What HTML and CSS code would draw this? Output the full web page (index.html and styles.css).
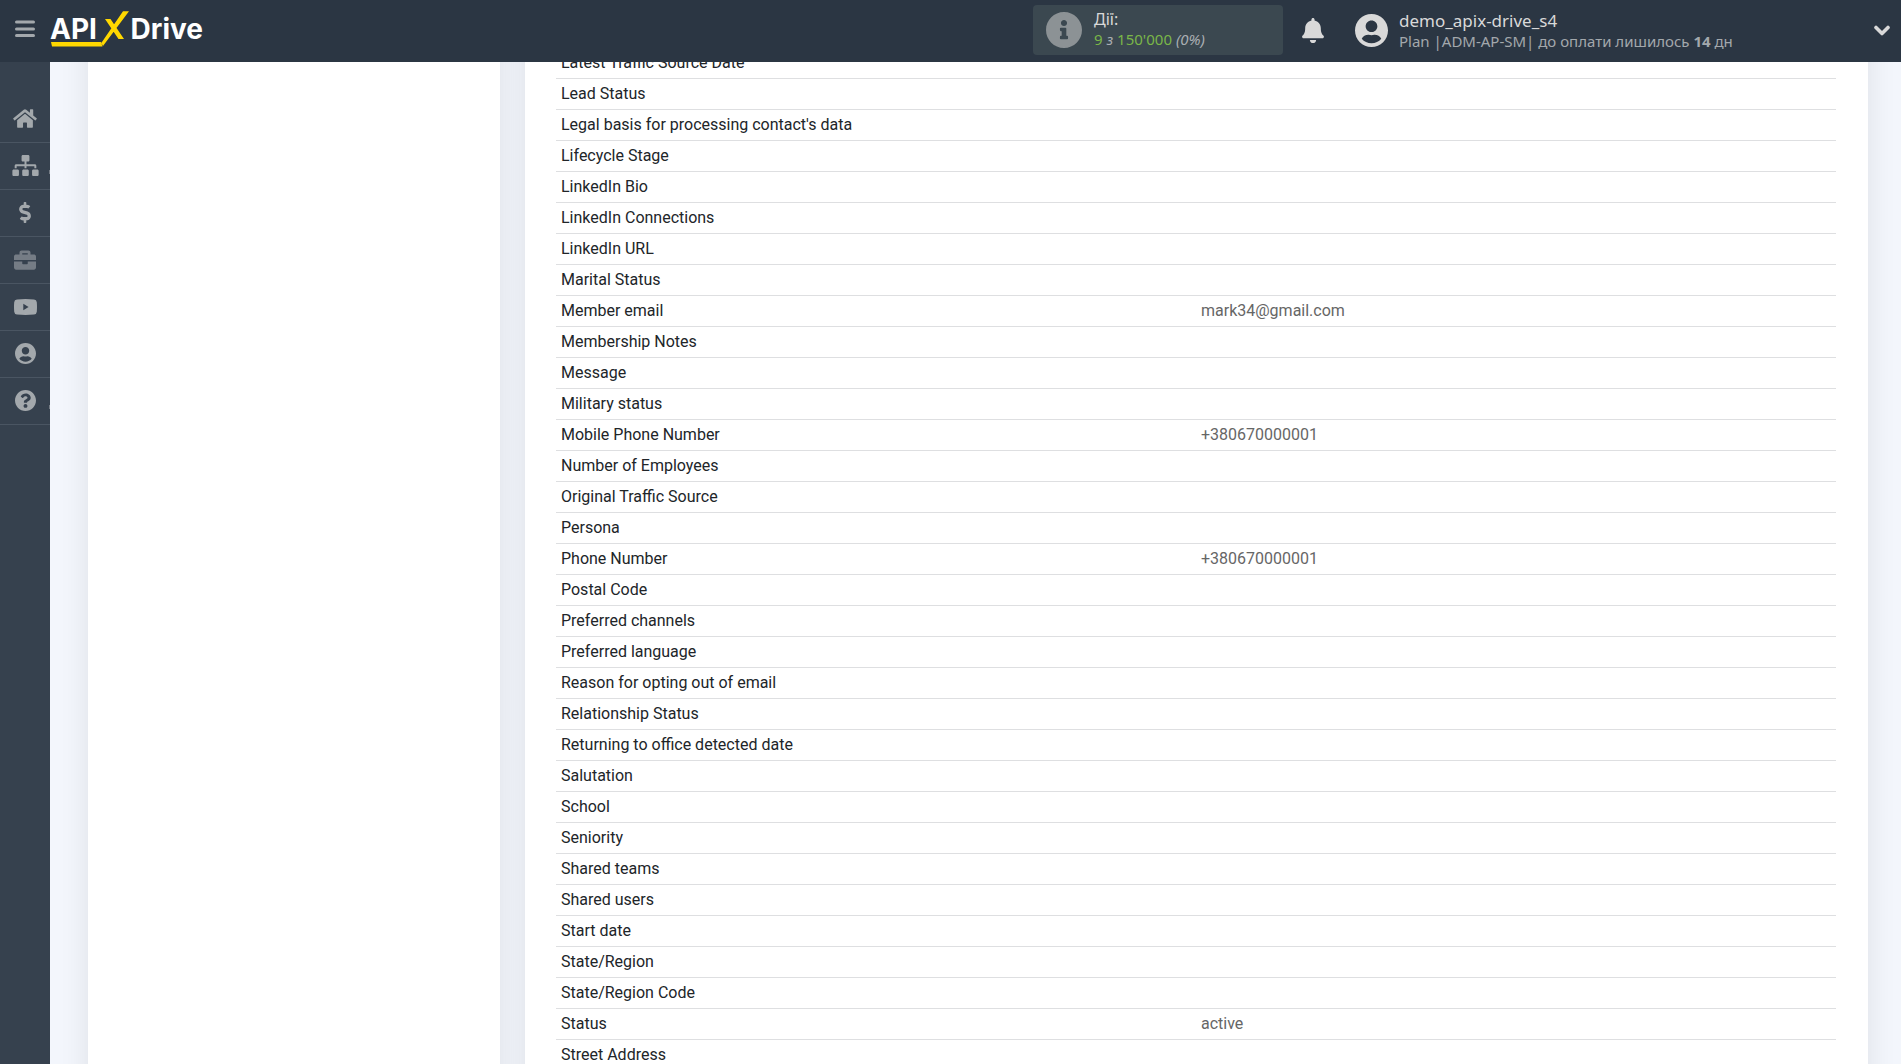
FILE: index.html
```html
<!DOCTYPE html>
<html lang="uk">
<head>
<meta charset="utf-8">
<title>APIXDrive</title>
<link rel="stylesheet" href="styles.css">
</head>
<body>
<header class="topbar">
  <button class="icon-btn menu-btn" type="button" aria-label="Меню">
    <svg width="20" height="18" viewBox="0 0 20 18"><path d="M1.500 2h17M1.500 9h17M1.500 15.500h17" stroke="currentColor" stroke-width="3" stroke-linecap="round"/></svg>
  </button>
  <a class="logo" href="#" aria-label="APIXDrive">
    <span class="logo-text">API</span>
    <span class="logo-text">Drive</span>
    <svg class="logo-mark" width="80" height="38" viewBox="0 0 80 38"><path d="M1 30h50l1.500 4.500H2zM51.300 31L73-.7h6L53 34zM55 7h5.500L74 27h-5.500z" fill="#ffd800"/></svg>
  </a>
  <a class="actions" href="#">
    <svg width="36" height="36" viewBox="8 8 496 496"><path fill="currentColor" d="M256 8C119.043 8 8 119.083 8 256c0 136.997 111.043 248 248 248s248-111.003 248-248C504 119.083 392.957 8 256 8zm0 110c23.196 0 42 18.804 42 42s-18.804 42-42 42-42-18.804-42-42 18.804-42 42-42zm56 254c0 6.627-5.373 12-12 12h-88c-6.627 0-12-5.373-12-12v-24c0-6.627 5.373-12 12-12h12v-64h-12c-6.627 0-12-5.373-12-12v-24c0-6.627 5.373-12 12-12h64c6.627 0 12 5.373 12 12v100h12c6.627 0 12 5.373 12 12v24z"/></svg>
    <span class="actions-text">
      <span class="actions-title">Дії:</span>
      <span class="actions-count"><b>9</b> <i>з</i> <b>150'000</b> <i>(0%)</i></span>
    </span>
  </a>
  <button class="icon-btn bell-btn" type="button" aria-label="Сповіщення">
    <svg width="22" height="25" viewBox="0 0 448 512"><path fill="currentColor" d="M224 512c35.320 0 63.970-28.650 63.970-64H160.030c0 35.350 28.650 64 63.970 64zm215.390-149.710c-19.320-20.760-55.470-51.990-55.470-154.290 0-77.700-54.480-139.900-127.940-155.160V32c0-17.670-14.320-32-31.980-32s-31.980 14.330-31.980 32v20.840C118.560 68.100 64.080 130.300 64.080 208c0 102.300-36.150 133.530-55.470 154.290-6 6.450-8.660 14.160-8.610 21.710.11 16.400 12.980 32 32.100 32h383.800c19.120 0 32-15.600 32.100-32 .05-7.550-2.610-15.270-8.610-21.710z"/></svg>
  </button>
  <button class="account" type="button">
    <svg width="33" height="33" viewBox="0 8 496 496"><use href="#user"/></svg>
    <span class="account-text">
      <span class="account-name">demo_apix-drive_s4</span>
      <span class="account-plan">Plan |ADM-AP-SM| до оплати лишилось <b>14</b> дн</span>
    </span>
    <svg class="chevron" width="16" height="11" viewBox="0 0 16 11"><path d="M2 2.500l6 6 6-6" fill="none" stroke="currentColor" stroke-width="3.600" stroke-linecap="round" stroke-linejoin="round"/></svg>
  </button>
</header>
<div class="layout">
  <nav class="sidebar">
    <a href="#" aria-label="Головна"><svg width="24" height="21" viewBox="0 0 576 512"><path fill="currentColor" d="M280.370 148.260L96 300.110V464a16 16 0 0 0 16 16l112.060-.29a16 16 0 0 0 15.920-16V368a16 16 0 0 1 16-16h64a16 16 0 0 1 16 16v95.640a16 16 0 0 0 16 16.050L464 480a16 16 0 0 0 16-16V300L295.670 148.260a12.190 12.190 0 0 0-15.300 0zM571.600 251.470L488 182.560V44.050a12 12 0 0 0-12-12h-56a12 12 0 0 0-12 12v72.610L318.470 43a48 48 0 0 0-61 0L4.340 251.470a12 12 0 0 0-1.600 16.900l25.500 31A12 12 0 0 0 45.150 301l235.220-193.740a12.190 12.190 0 0 1 15.300 0L530.900 301a12 12 0 0 0 16.900-1.600l25.500-31a12 12 0 0 0-1.700-16.930z"/></svg></a>
    <a class="has-sub" href="#" aria-label="Зв'язки"><svg width="27" height="21" viewBox="0 0 640 512"><path fill="currentColor" d="M128 352H32c-17.670 0-32 14.330-32 32v96c0 17.670 14.330 32 32 32h96c17.670 0 32-14.330 32-32v-96c0-17.670-14.330-32-32-32zm-24-80h192v48h48v-48h192v48h48v-57.590c0-21.170-17.230-38.410-38.410-38.410H344v-64h40c17.670 0 32-14.330 32-32V32c0-17.670-14.330-32-32-32H256c-17.670 0-32 14.330-32 32v96c0 17.670 14.330 32 32 32h40v64H94.410C73.230 224 56 241.230 56 262.410V320h48v-48zm264 80h-96c-17.670 0-32 14.330-32 32v96c0 17.670 14.330 32 32 32h96c17.670 0 32-14.330 32-32v-96c0-17.670-14.330-32-32-32zm240 0h-96c-17.670 0-32 14.330-32 32v96c0 17.670 14.330 32 32 32h96c17.670 0 32-14.330 32-32v-96c0-17.670-14.330-32-32-32z"/></svg></a>
    <a href="#" aria-label="Оплата"><svg width="12" height="21" viewBox="0 0 288 512"><path fill="currentColor" d="M209.200 233.400l-108-31.600C88.700 198.200 80 186.500 80 173.500c0-16.300 13.200-29.500 29.500-29.500h66.300c12.200 0 24.200 3.700 34.200 10.500 6.100 4.100 14.300 3.100 19.500-2l34.800-34c7.100-6.900 6.100-18.400-1.800-24.500C238 74.800 207.400 64.100 176 64V16c0-8.800-7.200-16-16-16h-32c-8.800 0-16 7.200-16 16v48h-2.500C45.800 64-5.400 118.700.5 183.600c4.200 46.100 39.400 83.600 83.800 96.600l102.500 30c12.500 3.700 21.200 15.300 21.200 28.300 0 16.300-13.200 29.500-29.500 29.500h-66.300C100 368 88 364.300 78 357.500c-6.100-4.100-14.300-3.100-19.500 2l-34.800 34c-7.100 6.900-6.100 18.400 1.800 24.500 24.500 19.200 55.100 29.900 86.500 30v48c0 8.800 7.200 16 16 16h32c8.800 0 16-7.200 16-16v-48.200c46.600-.9 90.300-28.600 105.700-72.700 21.500-61.600-14.600-124.800-72.500-141.700z"/></svg></a>
    <a class="dim" href="#" aria-label="Портфель"><svg width="22" height="22" viewBox="0 0 512 512"><path fill="currentColor" d="M320 336c0 8.840-7.160 16-16 16h-96c-8.840 0-16-7.160-16-16v-48H0v144c0 25.600 22.400 48 48 48h416c25.600 0 48-22.400 48-48V288H320v48zm144-208h-80V80c0-25.600-22.400-48-48-48H176c-25.600 0-48 22.400-48 48v48H48c-25.600 0-48 22.400-48 48v80h512v-80c0-25.600-22.400-48-48-48zm-144 0H192V96h128v32z"/></svg></a>
    <a href="#" aria-label="Відео"><svg width="23" height="16" viewBox="0 0 23 16"><path fill="currentColor" fill-rule="evenodd" d="M3 .4Q11.500-.4 20 .4 22.600.6 22.800 3.200q.4 4.800 0 9.600-.2 2.600-2.800 2.800-8.500.8-17 0Q.4 15.400.2 12.800q-.4-4.800 0-9.600Q.4.600 3 .4zM9.300 4.800v6.400L14.600 8z"/></svg></a>
    <a href="#" aria-label="Профіль"><svg width="21" height="21" viewBox="0 8 496 496"><path id="user" fill="currentColor" d="M248 8C111 8 0 119 0 256s111 248 248 248 248-111 248-248S385 8 248 8zm0 96c48.600 0 88 39.400 88 88s-39.400 88-88 88-88-39.400-88-88 39.400-88 88-88zm0 344c-58.700 0-111.300-26.600-146.500-68.200 18.800-35.400 55.600-59.800 98.500-59.800 2.400 0 4.800.4 7.100 1.100 13 4.200 26.600 6.900 40.900 6.900 14.300 0 28-2.700 40.900-6.900 2.300-.7 4.700-1.100 7.100-1.100 42.900 0 79.700 24.400 98.500 59.800C359.300 421.400 306.700 448 248 448z"/></svg></a>
    <a class="has-sub" href="#" aria-label="Допомога"><svg width="21" height="21" viewBox="8 8 496 496"><path fill="currentColor" d="M504 256c0 136.997-111.043 248-248 248S8 392.997 8 256C8 119.083 119.043 8 256 8s248 111.083 248 248zM262.655 90c-54.497 0-89.255 22.957-116.549 63.758-3.536 5.286-2.353 12.415 2.715 16.258l34.699 26.310c5.205 3.947 12.621 3.008 16.665-2.122 17.864-22.658 30.113-35.797 57.303-35.797 20.429 0 45.698 13.148 45.698 32.958 0 14.976-12.363 22.667-32.534 33.976C247.128 238.528 216 254.941 216 296v4c0 6.627 5.373 12 12 12h56c6.627 0 12-5.373 12-12v-1.333c0-28.462 83.186-29.647 83.186-106.667 0-58.002-60.165-102-116.531-102zM256 338c-25.365 0-46 20.635-46 46 0 25.364 20.635 46 46 46s46-20.636 46-46c0-25.365-20.635-46-46-46z"/></svg></a>
  </nav>
  <main class="content">
    <div class="columns">
      <section class="card"></section>
      <section class="card">
        <table class="fields">
          <tbody>
            <tr><th scope="row">Latest Traffic Source Date</th><td></td></tr>
            <tr><th scope="row">Lead Status</th><td></td></tr>
            <tr><th scope="row">Legal basis for processing contact's data</th><td></td></tr>
            <tr><th scope="row">Lifecycle Stage</th><td></td></tr>
            <tr><th scope="row">LinkedIn Bio</th><td></td></tr>
            <tr><th scope="row">LinkedIn Connections</th><td></td></tr>
            <tr><th scope="row">LinkedIn URL</th><td></td></tr>
            <tr><th scope="row">Marital Status</th><td></td></tr>
            <tr><th scope="row">Member email</th><td>mark34@gmail.com</td></tr>
            <tr><th scope="row">Membership Notes</th><td></td></tr>
            <tr><th scope="row">Message</th><td></td></tr>
            <tr><th scope="row">Military status</th><td></td></tr>
            <tr><th scope="row">Mobile Phone Number</th><td>+380670000001</td></tr>
            <tr><th scope="row">Number of Employees</th><td></td></tr>
            <tr><th scope="row">Original Traffic Source</th><td></td></tr>
            <tr><th scope="row">Persona</th><td></td></tr>
            <tr><th scope="row">Phone Number</th><td>+380670000001</td></tr>
            <tr><th scope="row">Postal Code</th><td></td></tr>
            <tr><th scope="row">Preferred channels</th><td></td></tr>
            <tr><th scope="row">Preferred language</th><td></td></tr>
            <tr><th scope="row">Reason for opting out of email</th><td></td></tr>
            <tr><th scope="row">Relationship Status</th><td></td></tr>
            <tr><th scope="row">Returning to office detected date</th><td></td></tr>
            <tr><th scope="row">Salutation</th><td></td></tr>
            <tr><th scope="row">School</th><td></td></tr>
            <tr><th scope="row">Seniority</th><td></td></tr>
            <tr><th scope="row">Shared teams</th><td></td></tr>
            <tr><th scope="row">Shared users</th><td></td></tr>
            <tr><th scope="row">Start date</th><td></td></tr>
            <tr><th scope="row">State/Region</th><td></td></tr>
            <tr><th scope="row">State/Region Code</th><td></td></tr>
            <tr><th scope="row">Status</th><td>active</td></tr>
            <tr><th scope="row">Street Address</th><td></td></tr>
          </tbody>
        </table>
      </section>
    </div>
  </main>
</div>
</body>
</html>
```
FILE: styles.css
```css
* { box-sizing: border-box; }

body {
  margin: 0;
  height: 100vh;
  display: flex;
  flex-direction: column;
  overflow: hidden;
  background: #f3f6fc;
  color: #212529;
  font-family: Roboto, sans-serif;
  font-size: 16px;
}

svg { display: block; flex: none; }
a { color: inherit; text-decoration: none; }
button { padding: 0; border: 0; background: none; color: inherit; font: inherit; cursor: pointer; }

/* Top bar */
.topbar {
  flex: none;
  height: 62px;
  padding-bottom: 2px;
  display: flex;
  align-items: center;
  background: #2b3643;
  color: #d9d9d9;
  font-family: "Noto Sans", sans-serif;
}
.menu-btn { width: 50px; display: grid; place-items: center; padding-bottom: 2px; color: #a3a8ac; }

.logo {
  position: relative;
  display: flex;
  justify-content: space-between;
  width: 153px;
  height: 36px;
  color: #fff;
}
.logo-text { font: 700 28px/34px Inter, sans-serif; }
.logo-mark { position: absolute; left: 0; top: 0; overflow: visible; }

.actions {
  width: 250px;
  height: 50px;
  margin: 0 19px 0 auto;
  padding: 0 13px;
  display: flex;
  align-items: center;
  gap: 12px;
  border-radius: 4px;
  background: #3b4850;
}
.actions svg { color: #8c9295; }
.actions-text, .account-text { display: flex; flex-direction: column; text-align: left; }
.actions-text { padding-bottom: 2px; }
.actions-title { font-size: 16px; line-height: 20px; }
.actions-count { font-size: 15px; line-height: 20px; color: #a9aeb2; }
.actions-count b { font-weight: 400; color: #7ab648; }

.bell-btn { margin-right: 31px; }
.account { width: 546px; display: flex; align-items: center; gap: 11px; padding-right: 11px; }
.account-text { padding-top: 2px; }
.account-name { font-size: 17px; line-height: 20px; }
.account-plan { font-size: 15px; line-height: 20px; color: #a3a8ac; white-space: nowrap; }
.chevron { margin-left: auto; }

/* Body */
.layout { flex: 1; min-height: 0; display: flex; }

.sidebar { flex: none; width: 50px; padding-top: 34px; background: #36414e; color: #a3a8ac; }
.sidebar a {
  position: relative;
  height: 47px;
  padding-bottom: 1px;
  display: grid;
  place-items: center;
  border-bottom: 1px solid #4a5562;
}
.sidebar .dim { color: #757c85; }
.has-sub::after {
  content: "";
  position: absolute;
  right: 0;
  bottom: 15px;
  width: 1px;
  height: 4px;
  background: #757c85;
}

.content { flex: 1; min-width: 0; overflow: hidden; padding: 0 33px 0 38px; }
.columns {
  display: grid;
  grid-template-columns: 412fr 1343fr;
  gap: 25px;
  margin-top: -60px;
}
.card {
  padding: 45px 32px 30px 31px;
  background: #fff;
  box-shadow: 0 0 28px rgba(0, 0, 0, .09);
}

.fields { width: 100%; table-layout: fixed; border-collapse: separate; border-spacing: 0; }
.fields th, .fields td {
  width: 50%;
  height: 31px;
  padding: 0 5px;
  border-top: 1px solid #dedfe1;
  font-weight: 400;
  line-height: 20px;
  text-align: left;
}
.fields td { color: #666; }
```
